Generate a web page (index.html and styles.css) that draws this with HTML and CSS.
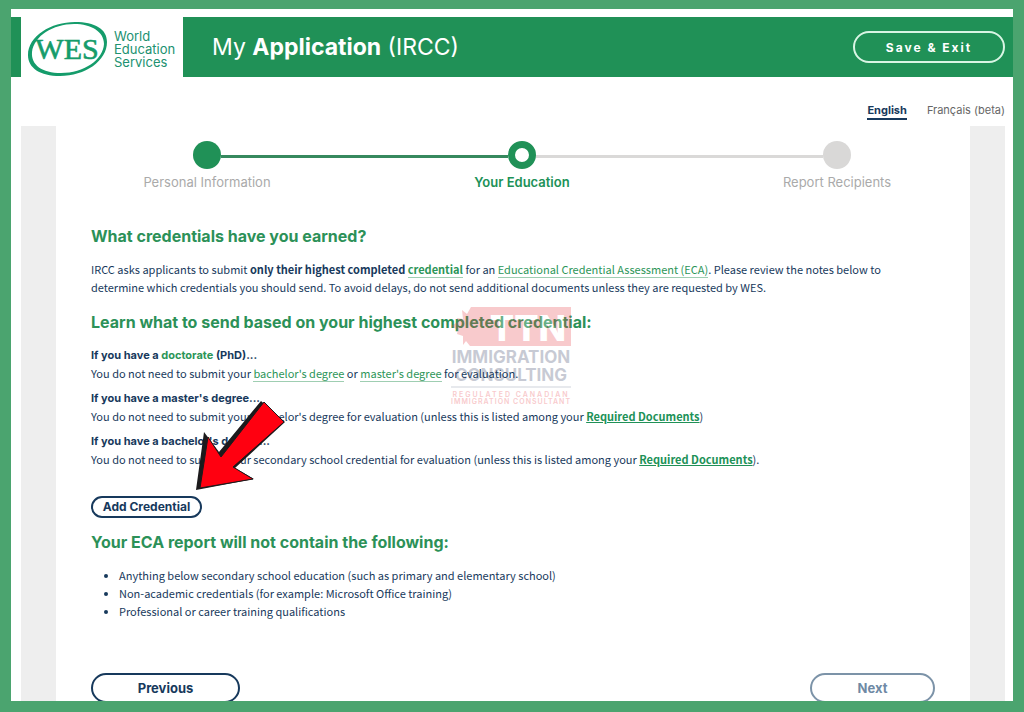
FILE: index.html
```
<!DOCTYPE html>
<html lang="en">

<head>
    <meta charset="UTF-8">
    <title>My Application (IRCC)</title>
    <link rel="stylesheet" href="styles.css">
</head>

<body>
    <div class="page">
        <header class="header">
            <a href="#" class="logo">
                <svg class="logo-mark" width="80" height="56" viewBox="0 0 80 56">
                    <path fill="#159c6b" fill-rule="evenodd" d="M0 34C0 15 23 1 47 1C67 1 79 8 79 21C79 40 57 55 32 55C12 55 0 47 0 34ZM4 31C3 44 14 52 33 52C56 52 75 39 76 23C76 11 64 3 46 3C25 3 6 15 4 31Z"/>
                    <text x="39" y="38" text-anchor="middle">WES</text>
                </svg>
                <span class="logo-text">World<br>Education<br>Services</span>
            </a>
            <h1>My <b>Application</b> (IRCC)</h1>
            <button type="button" class="save">Save &amp; Exit</button>
        </header>

        <nav class="lang">
            <a href="#" class="active">English</a>
            <a href="#">Français (beta)</a>
        </nav>

        <main class="main">
            <div class="panel">
                <ol class="steps">
                    <li class="done"><i></i>Personal Information</li>
                    <li class="current"><i></i>Your Education</li>
                    <li><i></i>Report Recipients</li>
                </ol>

                <h2>What credentials have you earned?</h2>
                <p class="intro">IRCC asks applicants to submit <b>only their highest completed <a href="#">credential</a></b> for an <a href="#">Educational Credential Assessment (ECA)</a>. Please review the notes below to<br>determine which credentials you should send. To avoid delays, do not send additional documents unless they are requested by WES.</p>

                <h2>Learn what to send based on your highest completed credential:</h2>
                <div class="note">
                    <h3>If you have a <a href="#">doctorate</a> (PhD)...</h3>
                    <p>You do not need to submit your <a href="#">bachelor's degree</a> or <a href="#">master's degree</a> for evaluation.</p>
                </div>
                <div class="note">
                    <h3>If you have a master's degree...</h3>
                    <p>You do not need to submit your bachelor's degree for evaluation (unless this is listed among your <a href="#" class="docs">Required Documents</a>)</p>
                </div>
                <div class="note">
                    <h3>If you have a bachelor's degree...</h3>
                    <p>You do not need to submit your secondary school credential for evaluation (unless this is listed among your <a href="#" class="docs">Required Documents</a>).</p>
                </div>

                <button type="button" class="add">Add Credential</button>

                <h2>Your ECA report will not contain the following:</h2>
                <ul>
                    <li>Anything below secondary school education (such as primary and elementary school)</li>
                    <li>Non-academic credentials (for example: Microsoft Office training)</li>
                    <li>Professional or career training qualifications</li>
                </ul>

                <div class="buttons">
                    <button type="button" class="prev">Previous</button>
                    <button type="button" class="next" disabled>Next</button>
                </div>

                <!-- watermark -->
                <svg class="watermark" width="124" height="100" viewBox="0 0 124 100">
                    <path fill="#e8434a" d="M21 1H121V40H20L16 35L13 39V30L7 28L8 24L1 20L8 16L7 12L13 13L12 4L17 8Z"/>
                    <text class="wm-logo" x="78" y="35" text-anchor="middle">TTN</text>
                    <text class="wm-big" x="61" y="57" text-anchor="middle">IMMIGRATION</text>
                    <text class="wm-big" x="61" y="75" text-anchor="middle">CONSULTING</text>
                    <path stroke="#5a6483" d="M1 81H121"/>
                    <text class="wm-small wide" x="61" y="91" text-anchor="middle">REGULATED CANADIAN</text>
                    <text class="wm-small" x="61" y="98" text-anchor="middle">IMMIGRATION CONSULTANT</text>
                </svg>

                <!-- pointer to the add button -->
                <svg class="arrow" width="92" height="92" viewBox="0 0 92 92">
                    <path fill="#1c1a1c" d="M66 1L90 22L40 68L59 79L1 90L9 32L24 52Z"/>
                    <path fill="#ff0010" stroke="#1c1a1c" d="M69 2L89 22L38 67L58 79L5 88L13 37L26 57Z"/>
                </svg>
            </div>
        </main>
    </div>
</body>

</html>
```
FILE: styles.css
```
* {
    margin: 0;
    padding: 0;
    box-sizing: border-box;
}

body {
    background-color: #4ba46f;
    color: #17395c;
    font-family: "Noto Sans CJK SC", "Open Sans", sans-serif;
    font-size: 11px;
    line-height: 18px;
}

a {
    color: #2c9558;
}

button {
    font-family: Inter, sans-serif;
    font-weight: 700;
    background-color: #fff;
    border: 2px solid #17395c;
    color: #17395c;
    cursor: pointer;
}

.page {
    height: 100vh;
    border: 11px solid #4ba46f;
    border-top-width: 9px;
    padding-top: 8px;
    background-color: #fff;
    overflow: hidden;
    display: flex;
    flex-direction: column;
}

/* header */
.header {
    height: 60px;
    flex-shrink: 0;
    display: flex;
    align-items: center;
    padding: 0 8px 0 10px;
    background-color: #209157;
    color: #fff;
}

.logo {
    height: 60px;
    width: 162px;
    display: flex;
    align-items: center;
    gap: 6px;
    padding: 4px 0 0 7px;
    background-color: #fff;
    color: #209170;
    text-decoration: none;
}

.logo-mark text {
    font-family: "Liberation Serif", serif;
    font-size: 30px;
    fill: #159c6b;
    stroke: #159c6b;
    stroke-width: 0.6px;
}

.logo-text {
    font-family: Inter, sans-serif;
    font-size: 13px;
    line-height: 13px;
}

.header h1 {
    margin-left: 29px;
    font-family: Inter, sans-serif;
    font-size: 23px;
    line-height: 30px;
    font-weight: 400;
}

.save {
    margin-left: auto;
    width: 152px;
    height: 32px;
    border-radius: 16px;
    border-color: #d9f5e4;
    background-color: transparent;
    color: #fff;
    font-size: 12px;
    letter-spacing: 2px;
}

/* language */
.lang {
    display: flex;
    justify-content: flex-end;
    gap: 20px;
    padding: 25px 8px 6px;
    font-family: Inter, sans-serif;
    font-size: 11px;
    line-height: 16px;
}

.lang a {
    color: #666;
    text-decoration: none;
}

.lang .active {
    color: #17395c;
    font-weight: 700;
    border-bottom: 2px solid #17395c;
}

/* content */
.main {
    flex: 1;
    margin: 0 8px 0 10px;
    padding: 0 35px;
    background-color: #eee;
}

.panel {
    position: relative;
    padding: 15px 35px;
    background-color: #fff;
}

.steps {
    display: flex;
    justify-content: space-between;
    padding: 0 28px 0 46px;
    margin-bottom: 33px;
    list-style: none;
    font-family: Inter, sans-serif;
    font-size: 13px;
    color: #aaa;
}

.steps li {
    flex: 1;
    position: relative;
    text-align: center;
}

.steps li:first-child,
.steps li:last-child {
    flex: 0 0 140px;
}

.steps i {
    display: block;
    width: 28px;
    height: 28px;
    margin: 0 auto 4px;
    border-radius: 50%;
    background-color: #d9d8d7;
}

.steps .done i {
    background-color: #209157;
}

.steps .current {
    color: #209157;
    font-weight: 600;
}

.steps .current i {
    border: 7px solid #209157;
    background-color: #fff;
}

/* the lines between the dots */
.steps .current::before,
.steps .current::after {
    content: "";
    position: absolute;
    top: 14px;
    height: 3px;
    left: -56px;
    right: calc(50% + 14px);
    background-color: #36895e;
}

.steps .current::after {
    left: calc(50% + 14px);
    right: -56px;
    background-color: #dad9d8;
}

h2 {
    margin: 12px 0;
    font-family: Inter, sans-serif;
    font-size: 16px;
    line-height: 24px;
    font-weight: 700;
    color: #2c9158;
}

h3 {
    font-family: Inter, sans-serif;
    font-size: 11px;
    line-height: 18px;
    font-weight: 700;
}

h3 a {
    text-decoration: none;
}

p a {
    text-decoration: none;
    border-bottom: 1px solid #9fceb2;
}

p .docs {
    color: #209157;
    font-weight: 700;
    text-decoration: underline;
    border-bottom: 0;
}

.intro {
    margin-bottom: 14px;
}

.note {
    margin-bottom: 7px;
}

.add {
    display: block;
    width: 111px;
    height: 22px;
    margin-top: 28px;
    border-radius: 11px;
    font-size: 12px;
    line-height: 16px;
}

.panel ul {
    padding-left: 28px;
}

.buttons {
    display: flex;
    justify-content: space-between;
    margin-top: 53px;
}

.buttons button {
    width: 149px;
    height: 30px;
    border-radius: 15px;
    font-size: 13px;
}

.buttons .next {
    width: 125px;
    color: #6f8aa5;
    border-color: #7c93a8;
}

.watermark {
    position: absolute;
    left: 394px;
    top: 180px;
    opacity: 0.28;
}

.wm-logo {
    font-family: Inter, sans-serif;
    font-weight: 800;
    font-size: 36px;
    fill: #fff;
}

.wm-big {
    font-family: Inter, sans-serif;
    font-weight: 700;
    font-size: 17px;
    fill: #3a4567;
}

.wm-small {
    font-family: Inter, sans-serif;
    font-weight: 600;
    font-size: 7px;
    letter-spacing: 1px;
    fill: #e8434a;
}

.wide {
    letter-spacing: 2px;
}

.arrow {
    position: absolute;
    left: 139px;
    top: 274px;
}
```
